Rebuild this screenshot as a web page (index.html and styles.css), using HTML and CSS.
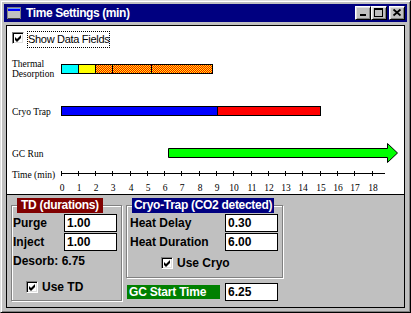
FILE: index.html
```html
<!DOCTYPE html>
<html lang="en">
<head>
    <meta charset="UTF-8">
    <meta name="viewport" content="width=device-width, initial-scale=1.0">
    <title>Time Settings (min)</title>
    <link rel="stylesheet" href="styles.css">
</head>
<body>
    <div class="window">
        <div class="titlebar">
            <svg class="app-icon" width="14" height="12" viewBox="0 0 14 12">
                <rect x="0.5" y="0.5" width="13" height="11" fill="#c0c0c0" stroke="#808080"/>
                <rect x="1" y="1" width="12" height="3" fill="#0000ff"/>
                <line x1="1" y1="1.5" x2="13" y2="1.5" stroke="#6c9cff"/>
                <line x1="1" y1="11.5" x2="13" y2="11.5" stroke="#404040"/>
            </svg>
            <span class="title">Time Settings (min)</span>
            <span class="tbtn">
                <svg width="14" height="12" viewBox="0 0 14 12"><rect x="4" y="7" width="6" height="2"/></svg>
            </span>
            <span class="tbtn">
                <svg width="14" height="12" viewBox="0 0 14 12"><path fill-rule="evenodd" d="M2 1h9v9h-9z M3 3h7v6h-7z"/></svg>
            </span>
            <span class="tbtn close">
                <svg width="14" height="12" viewBox="0 0 14 12"><path d="M3.5 2.5l7 6 M10.5 2.5l-7 6" stroke="#000" stroke-width="1.7"/></svg>
            </span>
        </div>

        <div class="client">
            <div class="chart">
                <div class="check-row data-fields">
                    <span class="check"><svg width="7" height="7" viewBox="0 0 7 7"><path d="M0 2l2 2 4-4v3l-4 4-2-2z"/></svg></span>
                    <span class="focus">Show Data Fields</span>
                </div>
                <svg class="timeline" width="398" height="146" viewBox="0 0 398 146">
                    <defs>
                        <pattern id="dither" width="2" height="2" patternUnits="userSpaceOnUse">
                            <rect width="2" height="2" fill="#ffff00"/>
                            <rect width="1" height="1" fill="#ff0000"/>
                            <rect x="1" y="1" width="1" height="1" fill="#ff0000"/>
                        </pattern>
                    </defs>
                    <!-- row labels -->
                    <text x="5" y="19">Thermal</text>
                    <text x="5" y="29">Desorption</text>
                    <text x="5" y="67">Cryo Trap</text>
                    <text x="5" y="109">GC Run</text>
                    <text x="5" y="130">Time (min)</text>

                    <g stroke="#000" shape-rendering="crispEdges">
                        <!-- TD: purge, inject, desorb -->
                        <rect x="54.5" y="16.5" width="17" height="9" fill="#00ffff"/>
                        <rect x="71.5" y="16.5" width="17" height="9" fill="#ffff00"/>
                        <rect x="88.5" y="16.5" width="117" height="9" fill="url(#dither)"/>
                        <line x1="105.5" y1="16.5" x2="105.5" y2="25.5"/>
                        <line x1="144.5" y1="16.5" x2="144.5" y2="25.5"/>
                        <!-- cryo trap -->
                        <rect x="54.5" y="58.5" width="156" height="9" fill="#0000ff"/>
                        <rect x="210.5" y="58.5" width="103" height="9" fill="#ff0000"/>
                        <!-- axis -->
                        <line x1="54" y1="125.5" x2="378" y2="125.5"/>
                        <path d="M54.5 123v5 M71.5 123v5 M88.5 123v5 M105.5 123v5 M123.5 123v5 M140.5 123v5 M157.5 123v5 M174.5 123v5 M192.5 123v5 M209.5 123v5 M226.5 123v5 M244.5 123v5 M261.5 123v5 M278.5 123v5 M295.5 123v5 M313.5 123v5 M330.5 123v5 M347.5 123v5 M365.5 123v5"/>
                    </g>
                    <!-- GC run -->
                    <polygon points="161.5,100.5 380.5,100.5 380.5,95.5 390.5,105 380.5,114.5 380.5,109.5 161.5,109.5" fill="#00ff00" stroke="#000"/>

                    <g class="ticks">
                        <text x="55" y="143">0</text>
                        <text x="72" y="143">1</text>
                        <text x="89" y="143">2</text>
                        <text x="106" y="143">3</text>
                        <text x="124" y="143">4</text>
                        <text x="141" y="143">5</text>
                        <text x="158" y="143">6</text>
                        <text x="175" y="143">7</text>
                        <text x="193" y="143">8</text>
                        <text x="210" y="143">9</text>
                        <text x="227" y="143">10</text>
                        <text x="245" y="143">11</text>
                        <text x="262" y="143">12</text>
                        <text x="279" y="143">13</text>
                        <text x="296" y="143">14</text>
                        <text x="314" y="143">15</text>
                        <text x="331" y="143">16</text>
                        <text x="348" y="143">17</text>
                        <text x="366" y="143">18</text>
                    </g>
                </svg>
            </div>

            <div class="panel">
                <fieldset class="group td">
                    <legend class="red">TD (durations)</legend>
                    <div class="field">
                        <label for="purge">Purge</label>
                        <input type="text" id="purge" value="1.00">
                    </div>
                    <div class="field">
                        <label for="inject">Inject</label>
                        <input type="text" id="inject" value="1.00">
                    </div>
                    <div class="desorb">Desorb: 6.75</div>
                    <div class="check-row use-td">
                        <span class="check"><svg width="7" height="7" viewBox="0 0 7 7"><path d="M0 2l2 2 4-4v3l-4 4-2-2z"/></svg></span>
                        <span>Use TD</span>
                    </div>
                </fieldset>

                <div class="right-col">
                    <fieldset class="group cryo">
                        <legend class="blue">Cryo-Trap (CO2 detected)</legend>
                        <div class="field">
                            <label for="heatDelay">Heat Delay</label>
                            <input type="text" id="heatDelay" value="0.30">
                        </div>
                        <div class="field">
                            <label for="heatDuration">Heat Duration</label>
                            <input type="text" id="heatDuration" value="6.00">
                        </div>
                        <div class="check-row use-cryo">
                            <span class="check"><svg width="7" height="7" viewBox="0 0 7 7"><path d="M0 2l2 2 4-4v3l-4 4-2-2z"/></svg></span>
                            <span>Use Cryo</span>
                        </div>
                    </fieldset>
                    <div class="field gc">
                        <label class="tag" for="gcStart">GC Start Time</label>
                        <input type="text" id="gcStart" value="6.25">
                    </div>
                </div>
            </div>
        </div>
    </div>
</body>
</html>
```

FILE: styles.css
```css
* {
    box-sizing: border-box;
}
body {
    margin: 0;
    background: #c0c0c0;
    font-family: "Liberation Sans", Arial, sans-serif;
}
.window {
    width: 411px;
    height: 313px;
    display: flex;
    flex-direction: column;
    padding: 3px;
    background: #c0c0c0;
    border: 1px solid;
    border-color: #dfdfdf #000 #000 #dfdfdf;
    box-shadow: inset 1px 1px #fff, inset -1px -1px #808080;
}

/* title bar */
.titlebar {
    height: 18px;
    flex: none;
    display: flex;
    align-items: center;
    padding: 0 2px 0 3px;
    background: #000080;
    color: #fff;
}
.app-icon {
    margin-right: 5px;
}
.title {
    flex: 1;
    font-size: 12px;
    font-weight: bold;
    letter-spacing: -0.4px;
}
.tbtn {
    width: 16px;
    height: 14px;
    display: flex;
    background: #c0c0c0;
    border: 1px solid;
    border-color: #fff #000 #000 #fff;
    box-shadow: inset 1px 1px #dfdfdf, inset -1px -1px #808080;
}
.tbtn.close {
    margin-left: 2px;
}

/* client area */
.client {
    flex: 1;
    display: flex;
    flex-direction: column;
    margin: 3px 2px 1px;
    border: 1px solid #000;
}
.chart {
    height: 169px;
    flex: none;
    padding-top: 5px;
    background: #fff;
    border-bottom: 1px solid #000;
}
.timeline {
    display: block;
}
.timeline text {
    font-family: "Liberation Serif", "Times New Roman", serif;
    font-size: 9.5px;
}
.timeline .ticks text {
    text-anchor: middle;
}

/* check boxes */
.check-row {
    display: flex;
    align-items: center;
    font-size: 12px;
    font-weight: bold;
}
.check {
    width: 12px;
    height: 12px;
    flex: none;
    display: flex;
    align-items: center;
    justify-content: center;
    margin-right: 4px;
    background: #fff;
    border: 1px solid;
    border-color: #808080 #fff #fff #808080;
    box-shadow: inset 1px 1px #000, inset -1px -1px #dfdfdf;
}
.data-fields {
    height: 17px;
    align-items: flex-start;
    margin-left: 5px;
    font-weight: normal;
    font-size: 11px;
    letter-spacing: -0.3px;
}
.data-fields .check {
    margin-top: 1px;
    margin-right: 3px;
}
.focus {
    height: 17px;
    line-height: 17px;
    padding: 0 1px;
    outline: 1px dotted #000;
    outline-offset: -1px;
}

/* bottom panel */
.panel {
    flex: 1;
    display: flex;
    align-items: flex-start;
    gap: 4px;
    padding: 3px 0 0 4px;
    font-size: 12px;
    font-weight: bold;
}
.group {
    margin: 0;
    min-width: 0;
    border: 1px solid #808080;
    box-shadow: 1px 1px 0 #fff, inset 1px 1px 0 #fff;
}
.group legend {
    height: 15px;
    line-height: 15px;
    padding: 0 4px;
    color: #fff;
    letter-spacing: -0.3px;
}
.red {
    background: #800000;
}
.blue {
    background: #000080;
}
.td {
    width: 111px;
    padding: 1px 4px 6px 1px;
}
.td legend {
    margin-left: 4px;
}
.cryo {
    width: 157px;
    padding: 1px 4px 7px 3px;
}
.cryo legend {
    margin-left: 2px;
    padding: 0 2px;
}
.field {
    height: 18px;
    margin-bottom: 1px;
    display: flex;
    align-items: center;
    justify-content: space-between;
}
input {
    width: 53px;
    height: 18px;
    padding: 0 0 0 2px;
    border: 1px solid #000;
    background: #fff;
    font: bold 12px "Liberation Sans", Arial, sans-serif;
    outline: none;
}
.desorb {
    margin-top: 2px;
    line-height: 16px;
}
.use-td {
    margin: 11px 0 0 13px;
}
.use-cryo {
    margin: 5px 0 0 31px;
}
.gc {
    margin-top: 5px;
    width: 152px;
}
.tag {
    width: 93px;
    height: 14px;
    line-height: 14px;
    margin-left: 1px;
    padding-left: 2px;
    background: #008000;
    color: #fff;
    letter-spacing: -0.2px;
}
```
